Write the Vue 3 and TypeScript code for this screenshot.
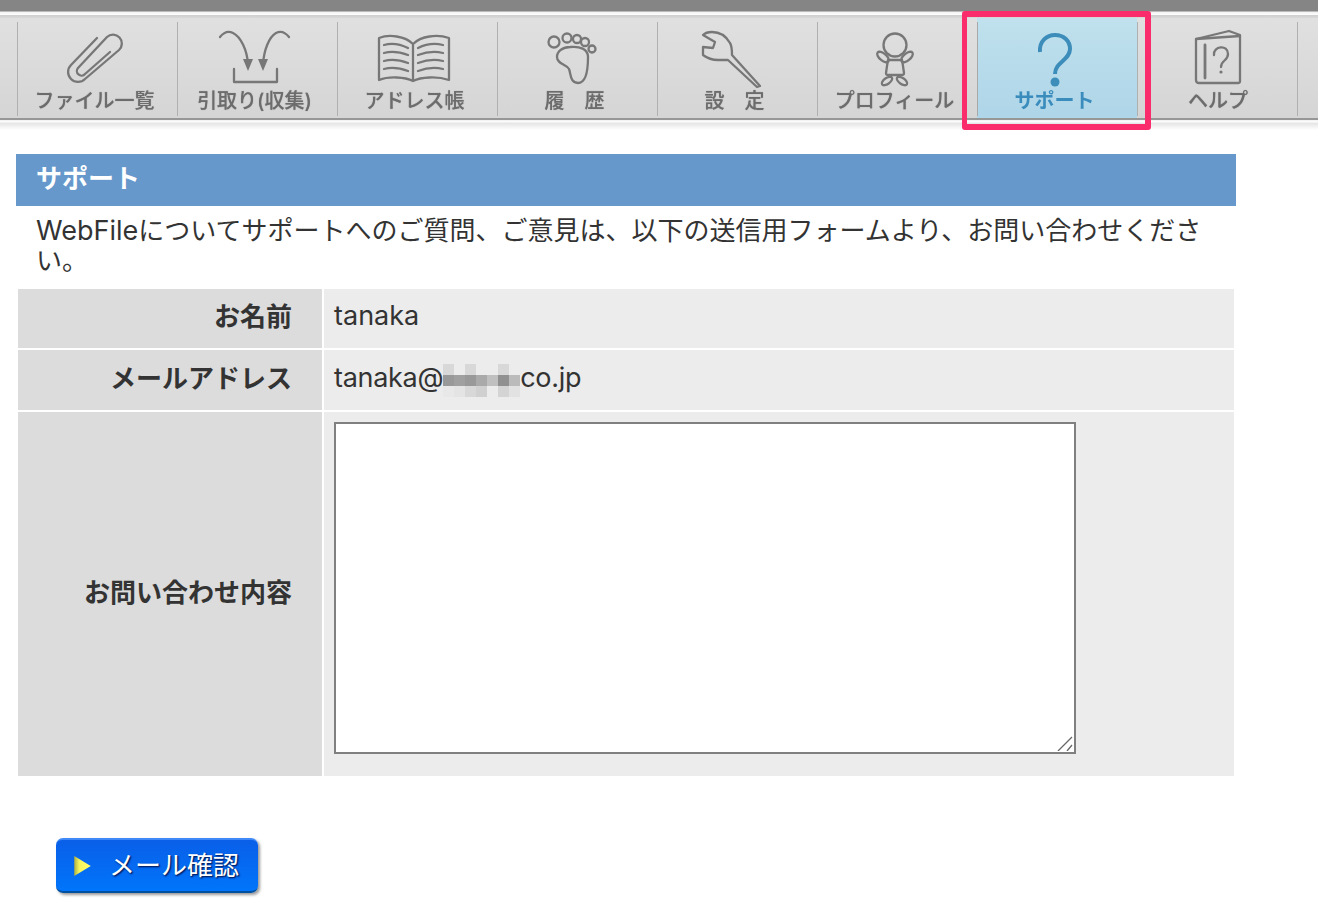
<script setup lang="ts">
const mosaic: string[] = [
  '#d8d8d8','#ececec','#d8d8d8','#ececec','#ececec','#d8d8d8','#ececec',
  '#999999','#a0a0a0','#999999','#aaaaaa','#c0c0c0','#909090','#bbbbbb',
  '#e8e8e8','#e4e4e4','#d8d8d8','#d0d0d0','#ececec','#d4d4d4','#e2e2e2'
]
</script>

<template>
  <div class="page">
    <div class="topbar"></div>
    <div class="toolbar">
      <nav class="nav">
        <a class="item">
          <svg class="icon" viewBox="0 0 160 68">
            <path d="M80 16 L54 43 A9.5 9.5 0 0 0 68 57 L102 28 A8 8 0 0 0 90 15 L61 46 A4.5 4.5 0 0 0 68 52 L93 30" />
          </svg>
          <span class="label">ファイル一覧</span>
        </a>
        <a class="item">
          <svg class="icon" viewBox="0 0 160 68">
            <path d="M43 15 C47 10 52 9 56 11 C64 15 70 28 71 42" />
            <path d="M112 15 C108 10 103 9 99 11 C92 15 87 28 86 42" />
            <path class="solid" d="M66 37 L76 37 L71 49 Z M81 37 L91 37 L86 49 Z" />
            <path d="M57 47 V60 H100 V47" />
          </svg>
          <span class="label">引取り(収集)</span>
        </a>
        <a class="item">
          <svg class="icon" viewBox="0 0 160 68">
            <path d="M76 22 C68 14 52 12 42 16 V58 C52 54 68 55 76 59 C84 55 100 54 112 58 V16 C100 12 84 14 76 22 V59" />
            <path d="M47 23 C54 21 63 22 71 26 M47 31 C54 29 63 30 71 33 M47 39 C54 37 63 38 71 41 M47 47 C54 45 63 46 71 49" />
            <path d="M81 26 C89 22 98 21 106 23 M81 33 C89 30 98 29 106 31 M81 41 C89 38 98 37 106 39 M81 49 C89 46 98 45 106 47" />
          </svg>
          <span class="label">アドレス帳</span>
        </a>
        <a class="item">
          <svg class="icon" viewBox="0 0 160 68">
            <circle cx="57" cy="20" r="5.5" />
            <circle cx="70" cy="16" r="4.5" />
            <circle cx="80" cy="17" r="4" />
            <circle cx="88" cy="20" r="4" />
            <circle cx="95" cy="27" r="3.5" />
            <path d="M73 25 C83 24 91 27 91 35 C91 45 90 61 81 61 C73 61 74 52 72 47 C69 42 60 42 60 35 C60 29 66 25 73 25 Z" />
          </svg>
          <span class="label">履　歴</span>
        </a>
        <a class="item">
          <svg class="icon" viewBox="0 0 160 68">
            <path d="M46 13 L58 20 L56 26 L46 25 V33 C50 36 55 38 61 38 H71 L100 65 L103 64 L75 33 C75 27 75 24 73 21 C69 14 62 10 55 10 C51 10 48 11 46 13 Z" />
          </svg>
          <span class="label">設　定</span>
        </a>
        <a class="item">
          <svg class="icon" viewBox="0 0 160 68">
            <circle cx="78" cy="23" r="11.5" />
            <path d="M71 38 H85 L86 44 L87 51 Q87 53 85 53 H71 Q69 53 69 51 L70 44 Z" />
            <ellipse cx="66" cy="35" rx="7" ry="3.5" transform="rotate(40 66 35)" />
            <ellipse cx="90" cy="35" rx="7" ry="3.5" transform="rotate(-40 90 35)" />
            <ellipse cx="70" cy="59" rx="6" ry="3" transform="rotate(-35 70 59)" />
            <ellipse cx="85" cy="59" rx="6" ry="3" transform="rotate(35 85 59)" />
          </svg>
          <span class="label">プロフィール</span>
        </a>
        <a class="item active">
          <svg class="icon question" viewBox="0 0 160 68">
            <path d="M63 30 C62 19 70 13 78 13 C87 13 93 19 93 27 C93 38 78 40 78 52" />
            <circle class="dot" cx="78" cy="60" r="4.5" />
          </svg>
          <span class="label">サポート</span>
        </a>
        <a class="item help">
          <svg class="icon" viewBox="0 0 160 68">
            <path d="M59 17 L92 9 L103 13 V59 Q103 61 101 61 H62 Q59 61 59 58 Z" />
            <path d="M59 17 L103 14" />
            <path class="wide" d="M68 23 V56" />
            <path d="M77 33 C76 24 91 22 91 32 C91 39 84 38 84 45" />
            <circle class="dot gray" cx="84" cy="50" r="1.6" />
          </svg>
          <span class="label">ヘルプ</span>
        </a>
        <a class="item end"></a>
      </nav>
      <div class="shade"></div>
      <div class="marker"></div>
    </div>

    <main class="main">
      <h1 class="title">サポート</h1>
      <p class="intro"><span class="latin">WebFile</span><span>についてサポートへのご質問、ご意見は、以下の送信用フォームより、お問い合わせください。</span></p>
      <table class="form">
        <tbody>
          <tr class="r1">
            <th>お名前</th>
            <td><span class="latin">tanaka</span></td>
          </tr>
          <tr class="r2">
            <th>メールアドレス</th>
            <td>
              <span class="mail latin">tanaka@<span class="mosaic"><i v-for="(c, i) in mosaic" :key="i" :style="{ background: c }"></i></span>co.jp</span>
            </td>
          </tr>
          <tr>
            <th>お問い合わせ内容</th>
            <td class="area">
              <div class="field">
                <textarea class="message"></textarea>
                <svg class="grip" viewBox="0 0 16 15">
                  <path d="M1 15 L15 1 M10 15 L15 9" />
                </svg>
              </div>
            </td>
          </tr>
        </tbody>
      </table>
      <button class="send" type="button">
        <svg class="arrow" viewBox="0 0 20 24">
          <defs>
            <linearGradient id="tri" x1="0" y1="0" x2="1" y2="0">
              <stop offset="0" stop-color="#b0b040" />
              <stop offset="0.3" stop-color="#f4f45c" />
              <stop offset="1" stop-color="#ffff70" />
            </linearGradient>
          </defs>
          <path d="M1 1 L19 12 L1 23 Z" fill="url(#tri)" />
        </svg>
        <span class="send-text">メール確認</span>
      </button>
    </main>
  </div>
</template>

<style>
html, body { background: #fff; }
</style>

<style scoped>
.page {
  width: 1318px;
  height: 916px;
  overflow: hidden;
  background: #fff;
  font-family: Inter, "Noto Sans CJK JP", sans-serif;
  color: #333;
}
.latin {
  font-size: 27px;
}
.topbar {
  height: 11px;
  background: #858585;
}
.toolbar {
  position: relative;
  background: linear-gradient(#bbbbbb 0, #bbbbbb 1px, #f2f2f2 1px, #ffffff 4px, #cfcfcf 4px, #d8d8d8 7px);
  padding-top: 7px;
}
.nav {
  display: flex;
  height: 100px;
  padding-left: 17px;
  background: linear-gradient(#e0e0e0, #d5d5d5);
  border-bottom: 2px solid #979797;
  filter: blur(0.5px);
}
.item {
  width: 160px;
  flex: none;
  display: flex;
  flex-direction: column;
  align-items: center;
  padding-top: 4px;
  box-sizing: border-box;
  background: linear-gradient(#b0b0b0, #b0b0b0) left 4px / 1px 94px no-repeat;
}
.item.end {
  flex: 1;
}
.item.active {
  background:
    linear-gradient(#a8a8a8, #a8a8a8) left 4px / 1px 94px no-repeat,
    linear-gradient(#c0e1ed, #aed5e8);
}
.icon {
  width: 160px;
  height: 68px;
  flex: none;
  fill: none;
  stroke: #777777;
  stroke-width: 2.3;
  stroke-linejoin: round;
  stroke-linecap: round;
}
.icon .solid { fill: #777777; stroke: none; }
.icon .wide { stroke-width: 2.8; }
.icon .dot { fill: #3d8dbb; stroke: none; }
.icon .dot.gray { fill: #777777; }
.icon.question { stroke: #3d8dbb; stroke-width: 4; stroke-linecap: butt; }
.label {
  padding-right: 5px;
  height: 22px;
  line-height: 22px;
  font-size: 20px;
  font-weight: 500;
  color: #6c6c6c;
  text-shadow: 0 0 1px #8a8a8a;
  white-space: nowrap;
}
.help .label {
  padding-right: 0;
  padding-left: 2px;
}
.active .label {
  color: #3a8cbc;
  font-weight: 700;
  text-shadow: none;
}
.shade {
  height: 10px;
  background: linear-gradient(#f0f0f0 0, #ffffff 2px, #e4e4e4 3px, #ffffff 10px);
}
.marker {
  position: absolute;
  left: 962px;
  top: 0;
  width: 189px;
  height: 119px;
  box-sizing: border-box;
  border: 6px solid #fb2c6c;
  border-left-width: 5px;
  border-radius: 3px;
  pointer-events: none;
}
.main {
  margin: 24px 0 0 16px;
  width: 1220px;
}
.title {
  margin: 0;
  height: 52px;
  line-height: 50px;
  padding-left: 20px;
  font-size: 26px;
  font-weight: 700;
  color: #fff;
  background: #6698cc;
}
.intro {
  margin: 0;
  height: 81px;
  box-sizing: border-box;
  padding: 10px 20px 0;
  font-size: 26px;
  line-height: 30px;
}
.form {
  width: 1220px;
  border-spacing: 2px;
  border-collapse: separate;
  table-layout: fixed;
}
.form th {
  width: 274px;
  padding: 0 30px 8px 0;
  background: #dcdcdc;
  text-align: right;
  font-size: 26px;
  font-weight: 700;
  color: #333;
}
.form td {
  padding: 0 10px 6px;
  background: #ececec;
  font-size: 26px;
}
.r1 { height: 59px; }
.r2 { height: 60px; }
.mail {
  display: inline-flex;
  align-items: center;
  letter-spacing: -0.3px;
}
.mosaic {
  display: inline-grid;
  grid-template-columns: repeat(7, 11px);
  grid-auto-rows: 11px;
  margin-top: 6px;
}
.mosaic i {
  display: block;
}
.form .area {
  height: 364px;
  padding: 10px 10px 22px;
  box-sizing: border-box;
  vertical-align: top;
}
.field {
  position: relative;
  width: 742px;
  height: 332px;
}
.message {
  display: block;
  width: 100%;
  height: 100%;
  box-sizing: border-box;
  margin: 0;
  padding: 2px;
  border: 2px solid #808080;
  background: #fff;
  border-radius: 0;
  outline: none;
  resize: none;
}
.grip {
  position: absolute;
  right: 3px;
  bottom: 3px;
  width: 16px;
  height: 15px;
  fill: none;
  stroke: #666;
  stroke-width: 1.3;
}
.send {
  display: flex;
  align-items: center;
  width: 202px;
  height: 55px;
  margin: 60px 0 0 40px;
  padding: 0 0 0 17px;
  box-sizing: border-box;
  border: 0;
  border-top: 2px solid #3f88f8;
  border-bottom: 2px solid #00509f;
  border-radius: 7px;
  background: linear-gradient(#0a5fe8, #0075fb);
  box-shadow: 2px 2px 3px rgba(0, 0, 0, 0.4);
  font-family: inherit;
  font-size: 26px;
  color: #fff;
}
.send-text {
  padding-bottom: 5px;
  text-shadow: 1px 1px 2px #001f60, 1px 1px 1px #003090;
}
.arrow {
  width: 19px;
  height: 22px;
  flex: none;
  margin-right: 17px;
  filter: blur(0.5px);
}
</style>
